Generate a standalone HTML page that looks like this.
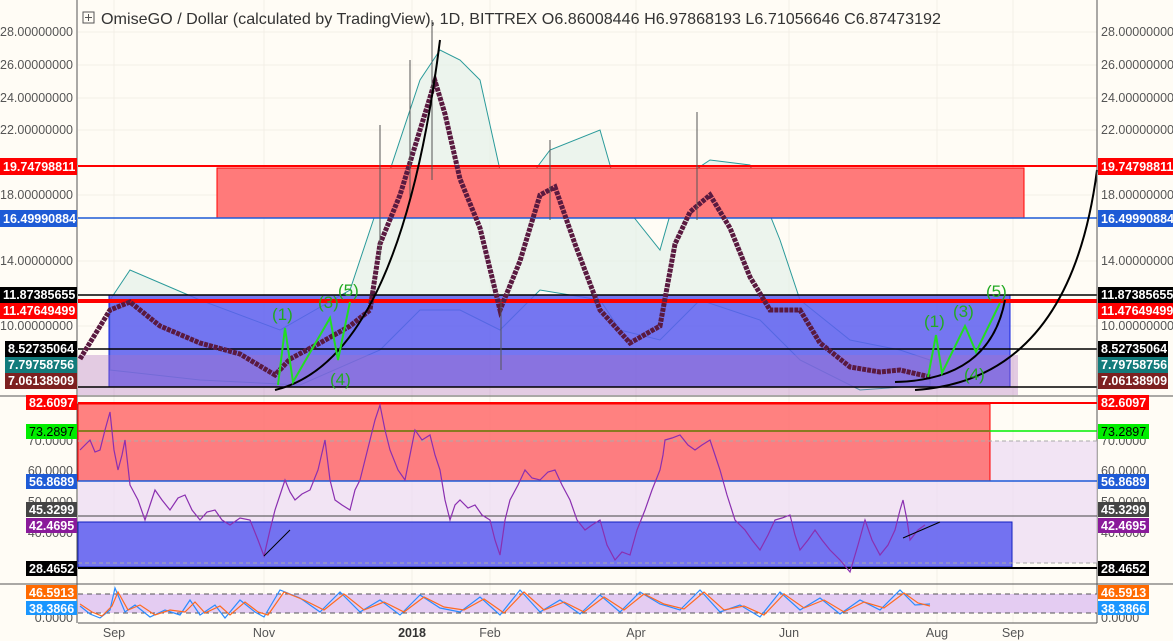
<!DOCTYPE html>
<html><head><meta charset="utf-8"><style>
html,body{margin:0;padding:0;background:#fffcf5;}
svg{display:block;font-family:"Liberation Sans",sans-serif;}
</style></head><body>
<svg width="1173" height="641" viewBox="0 0 1173 641" xmlns="http://www.w3.org/2000/svg">
<rect width="1173" height="641" fill="#fffcf5"/>
<g stroke="#f3efe6" stroke-width="1">
<line x1="78" y1="32" x2="1097" y2="32"/><line x1="78" y1="65" x2="1097" y2="65"/><line x1="78" y1="98" x2="1097" y2="98"/><line x1="78" y1="130" x2="1097" y2="130"/><line x1="78" y1="195" x2="1097" y2="195"/><line x1="78" y1="261" x2="1097" y2="261"/><line x1="78" y1="326" x2="1097" y2="326"/>
<line x1="114" y1="0" x2="114" y2="623"/><line x1="264" y1="0" x2="264" y2="623"/><line x1="412" y1="0" x2="412" y2="623"/><line x1="490" y1="0" x2="490" y2="623"/><line x1="636" y1="0" x2="636" y2="623"/><line x1="789" y1="0" x2="789" y2="623"/><line x1="937" y1="0" x2="937" y2="623"/><line x1="1013" y1="0" x2="1013" y2="623"/>
</g>
<path d="M110,300 L130,270 L200,300 L280,330 L350,290 L380,200 L420,80 L440,50 L460,60 L480,80 L500,170 L520,190 L550,150 L600,130 L620,200 L660,250 L680,180 L710,160 L750,165 L780,240 L800,300 L850,340 L900,350 L930,360 L930,385 L860,390 L800,360 L760,320 L700,300 L660,340 L620,330 L600,300 L540,290 L500,330 L460,310 L420,310 L380,350 L300,385 L200,380 L110,370 Z" fill="#dfeee8" fill-opacity="0.6" stroke="#2a9a9a" stroke-width="1"/>
<rect x="217" y="168" width="807" height="50" fill="#ff7a7a" stroke="#ff0000" stroke-width="1"/>
<line x1="78" y1="166" x2="1097" y2="166" stroke="#ff0000" stroke-width="2"/>
<line x1="78" y1="218" x2="1097" y2="218" stroke="#1e5bd6" stroke-width="1.5"/>
<rect x="109" y="295" width="901" height="92" fill="#5d5ef0" fill-opacity="0.85" stroke="#1020e0"/>
<rect x="78" y="355" width="940" height="40" fill="#b070c0" fill-opacity="0.35"/>
<line x1="78" y1="295" x2="1097" y2="295" stroke="#000" stroke-width="1.5"/>
<line x1="78" y1="301" x2="1097" y2="301" stroke="#ff0000" stroke-width="4"/>
<line x1="78" y1="349" x2="1097" y2="349" stroke="#000" stroke-width="1.5"/>
<line x1="78" y1="387" x2="1097" y2="387" stroke="#000" stroke-width="1.5"/>
<polyline fill="none" stroke="#5a1a40" stroke-width="5" stroke-dasharray="4 1" points="80,359 110,310 130,302 160,326 200,343 240,354 275,375 290,359 320,343 350,326 370,310 380,244 400,195 420,130 435,81 445,114 460,179 480,228 500,310 520,261 540,195 555,187 575,244 600,310 630,343 660,326 675,244 690,212 710,195 730,228 750,277 770,310 800,310 820,343 850,367 880,372 900,370 930,377"/>
<g stroke="#555" stroke-width="1"><line x1="432" y1="20" x2="432" y2="180"/><line x1="380" y1="125" x2="380" y2="260"/><line x1="697" y1="112" x2="697" y2="220"/><line x1="501" y1="300" x2="501" y2="370"/><line x1="410" y1="60" x2="410" y2="200"/><line x1="550" y1="140" x2="550" y2="220"/></g>
<path d="M275,390 Q400,360 440,40" fill="none" stroke="#000" stroke-width="2"/>
<path d="M895,382 Q990,380 1005,300" fill="none" stroke="#000" stroke-width="2"/>
<path d="M915,390 Q1070,380 1097,170" fill="none" stroke="#000" stroke-width="2"/>
<polyline points="278,385 285,328 293,382 330,318 338,360 350,302" fill="none" stroke="#22dd22" stroke-width="2"/>
<polyline points="928,377 936,335 942,373 965,326 976,352 1000,303" fill="none" stroke="#22dd22" stroke-width="2"/>
<g fill="#22aa22" font-size="17"><text x="272" y="320">(1)</text><text x="318" y="308">(3)</text><text x="338" y="296">(5)</text><text x="924" y="327">(1)</text><text x="953" y="317">(3)</text><text x="986" y="297">(5)</text><text x="964" y="380">(4)</text><text x="330" y="385">(4)</text></g>
<rect x="83" y="12" width="11" height="11" fill="none" stroke="#555"/><line x1="88.5" y1="14" x2="88.5" y2="21" stroke="#555"/><line x1="85" y1="17.5" x2="92" y2="17.5" stroke="#555"/>
<text x="101" y="24" font-size="16" fill="#333" textLength="840" lengthAdjust="spacingAndGlyphs">OmiseGO / Dollar (calculated by TradingView), 1D, BITTREX   O6.86008446   H6.97868193   L6.71056646   C6.87473192</text>
<line x1="0" y1="396" x2="1173" y2="396" stroke="#555"/>
<line x1="0" y1="584" x2="1173" y2="584" stroke="#555"/>
<line x1="78" y1="623" x2="1097" y2="623" stroke="#555"/>
<line x1="77" y1="0" x2="77" y2="623" stroke="#555"/>
<line x1="1097" y1="0" x2="1097" y2="623" stroke="#555"/>
<rect x="78" y="441" width="1019" height="122" fill="#eddaf3" fill-opacity="0.7"/>
<rect x="78" y="404" width="912" height="77" fill="#ff6b6b" fill-opacity="0.85" stroke="#ff0000"/>
<line x1="78" y1="403" x2="1097" y2="403" stroke="#ff0000" stroke-width="2"/>
<line x1="78" y1="431" x2="1097" y2="431" stroke="#00ee00" stroke-width="1.5"/>
<line x1="78" y1="431" x2="990" y2="431" stroke="#8a7a20" stroke-width="2"/>
<line x1="78" y1="481" x2="1097" y2="481" stroke="#1e5bd6" stroke-width="1.5"/>
<line x1="78" y1="516" x2="1097" y2="516" stroke="#444"/>
<rect x="78" y="522" width="934" height="45" fill="#5d5ef0" fill-opacity="0.85" stroke="#1020c0"/>
<line x1="78" y1="568" x2="1097" y2="568" stroke="#000" stroke-width="2"/>
<line x1="78" y1="441" x2="1097" y2="441" stroke="#aaa" stroke-dasharray="4 3"/>
<line x1="78" y1="563" x2="1097" y2="563" stroke="#aaa" stroke-dasharray="4 3"/>
<polyline fill="none" stroke="#8a2fb0" stroke-width="1.2" points="80,450 85,445 90,440 95,452 100,450 105,430 110,412 114,450 118,470 122,455 125,440 130,485 138,500 145,520 150,505 155,490 162,500 170,510 178,498 185,495 192,510 200,520 207,512 215,510 222,520 230,525 240,518 250,520 258,540 264,556 270,530 275,510 280,495 285,480 290,492 295,500 302,494 310,490 318,470 325,440 330,480 335,500 342,505 350,510 355,490 360,480 365,460 370,440 375,420 380,405 385,430 390,450 398,470 405,480 410,455 415,430 422,440 430,435 435,455 440,470 445,500 450,520 455,505 460,500 468,508 475,505 482,515 490,520 495,540 500,555 505,520 510,500 518,485 525,470 532,478 540,480 548,472 555,470 562,485 570,500 577,520 585,530 592,525 600,520 607,545 615,560 622,552 630,555 637,530 645,510 652,490 660,470 663,455 665,440 672,438 680,435 688,445 695,450 702,445 710,440 715,455 720,470 727,495 735,520 740,525 745,530 752,540 760,550 768,535 775,520 782,518 790,515 795,535 800,550 808,540 815,530 822,540 830,550 840,560 850,572 858,545 865,520 872,540 880,555 888,545 895,530 900,510 903,500 907,520 910,540 918,530 925,525"/>
<line x1="264" y1="556" x2="290" y2="530" stroke="#000"/>
<line x1="903" y1="538" x2="940" y2="522" stroke="#000"/>
<rect x="78" y="594" width="1019" height="19" fill="#e4ccf2"/>
<line x1="78" y1="594" x2="1097" y2="594" stroke="#555" stroke-dasharray="5 4"/>
<line x1="78" y1="613" x2="1097" y2="613" stroke="#555" stroke-dasharray="5 4"/>
<polyline fill="none" stroke="#2a8cff" stroke-width="1.2" points="80,606 90,614 100,618 110,610 115,588 125,612 135,605 150,617 165,610 180,615 190,600 200,615 215,605 225,618 240,600 255,612 264,617 280,590 300,598 320,612 340,592 360,612 380,600 400,615 420,595 440,608 460,612 480,597 500,615 520,590 540,612 560,600 580,614 600,595 620,612 640,592 660,604 680,610 700,590 720,612 740,605 760,617 780,592 800,610 820,598 840,614 860,600 880,610 900,590 915,605 930,604"/>
<polyline fill="none" stroke="#ff6a20" stroke-width="1.2" points="80,604 92,612 102,616 112,606 118,592 128,610 140,605 155,615 170,610 185,612 195,602 205,613 220,606 230,615 245,602 258,612 268,615 284,592 304,600 324,610 344,594 364,610 384,602 404,612 424,597 444,607 464,610 484,599 504,613 524,592 544,610 564,602 584,612 604,597 624,610 644,594 664,604 684,609 704,592 724,610 744,606 764,615 784,594 804,608 824,600 844,612 864,602 884,608 904,593 918,603 930,606"/>
<g font-size="12.5" fill="#555" text-anchor="end">
<text x="73" y="36">28.00000000</text><text x="73" y="69">26.00000000</text><text x="73" y="102">24.00000000</text><text x="73" y="134">22.00000000</text><text x="73" y="199">18.00000000</text><text x="73" y="265">14.00000000</text><text x="73" y="330">10.00000000</text>
<text x="73" y="445">70.0000</text><text x="73" y="475">60.0000</text><text x="73" y="506">50.0000</text><text x="73" y="537">40.0000</text><text x="73" y="622">0.0000</text>
</g>
<g font-size="12.5" fill="#555">
<text x="1101" y="36">28.00000000</text><text x="1101" y="69">26.00000000</text><text x="1101" y="102">24.00000000</text><text x="1101" y="134">22.00000000</text><text x="1101" y="199">18.00000000</text><text x="1101" y="265">14.00000000</text><text x="1101" y="330">10.00000000</text>
<text x="1101" y="445">70.0000</text><text x="1101" y="475">60.0000</text><text x="1101" y="506">50.0000</text><text x="1101" y="537">40.0000</text><text x="1101" y="622">0.0000</text>
</g>
<g font-size="12.5" font-weight="bold" fill="#fff">
<rect x="0" y="158" width="77" height="17" fill="#ff0000"/><text x="3" y="171">19.74798811</text>
<rect x="0" y="210" width="77" height="17" fill="#1e5bd6"/><text x="3" y="223">16.49990884</text>
<rect x="0" y="287" width="77" height="16" fill="#000"/><text x="3" y="299">11.87385655</text>
<rect x="0" y="303" width="77" height="16" fill="#ff0000"/><text x="3" y="315">11.47649499</text>
<rect x="5" y="341" width="72" height="16" fill="#000"/><text x="8" y="353">8.52735064</text>
<rect x="5" y="357" width="72" height="16" fill="#127b7b"/><text x="8" y="369">7.79758756</text>
<rect x="5" y="373" width="72" height="16" fill="#7d2020"/><text x="8" y="385">7.06138909</text>
<rect x="1098" y="158" width="75" height="17" fill="#ff0000"/><text x="1101" y="171">19.74798811</text>
<rect x="1098" y="210" width="75" height="17" fill="#1e5bd6"/><text x="1101" y="223">16.49990884</text>
<rect x="1098" y="287" width="75" height="16" fill="#000"/><text x="1101" y="299">11.87385655</text>
<rect x="1098" y="303" width="75" height="16" fill="#ff0000"/><text x="1101" y="315">11.47649499</text>
<rect x="1098" y="341" width="70" height="16" fill="#000"/><text x="1101" y="353">8.52735064</text>
<rect x="1098" y="357" width="70" height="16" fill="#127b7b"/><text x="1101" y="369">7.79758756</text>
<rect x="1098" y="373" width="70" height="16" fill="#7d2020"/><text x="1101" y="385">7.06138909</text>
<rect x="26" y="395" width="51" height="15" fill="#ff0000"/><text x="29" y="407">82.6097</text>
<rect x="26" y="424" width="51" height="15" fill="#00ee00"/><text x="29" y="436" fill="#000" font-weight="normal">73.2897</text>
<rect x="26" y="474" width="51" height="15" fill="#1e5bd6"/><text x="29" y="486">56.8689</text>
<rect x="26" y="502" width="51" height="15" fill="#444"/><text x="29" y="514">45.3299</text>
<rect x="26" y="518" width="51" height="15" fill="#8a1a9a"/><text x="29" y="530">42.4695</text>
<rect x="26" y="561" width="51" height="15" fill="#000"/><text x="29" y="573">28.4652</text>
<rect x="26" y="585" width="51" height="14" fill="#ff6a00"/><text x="29" y="597">46.5913</text>
<rect x="26" y="601" width="51" height="14" fill="#1a96ff"/><text x="29" y="613">38.3866</text>
<rect x="1098" y="395" width="51" height="15" fill="#ff0000"/><text x="1101" y="407">82.6097</text>
<rect x="1098" y="424" width="51" height="15" fill="#00ee00"/><text x="1101" y="436" fill="#000" font-weight="normal">73.2897</text>
<rect x="1098" y="474" width="51" height="15" fill="#1e5bd6"/><text x="1101" y="486">56.8689</text>
<rect x="1098" y="502" width="51" height="15" fill="#444"/><text x="1101" y="514">45.3299</text>
<rect x="1098" y="518" width="51" height="15" fill="#8a1a9a"/><text x="1101" y="530">42.4695</text>
<rect x="1098" y="561" width="51" height="15" fill="#000"/><text x="1101" y="573">28.4652</text>
<rect x="1098" y="585" width="51" height="14" fill="#ff6a00"/><text x="1101" y="597">46.5913</text>
<rect x="1098" y="601" width="51" height="14" fill="#1a96ff"/><text x="1101" y="613">38.3866</text>
</g>
<g font-size="12.5" fill="#555" text-anchor="middle">
<text x="114" y="637">Sep</text><text x="264" y="637">Nov</text><text x="412" y="637" font-weight="bold" fill="#333">2018</text><text x="490" y="637">Feb</text><text x="636" y="637">Apr</text><text x="789" y="637">Jun</text><text x="937" y="637">Aug</text><text x="1013" y="637">Sep</text>
</g>
</svg>
</body></html>
